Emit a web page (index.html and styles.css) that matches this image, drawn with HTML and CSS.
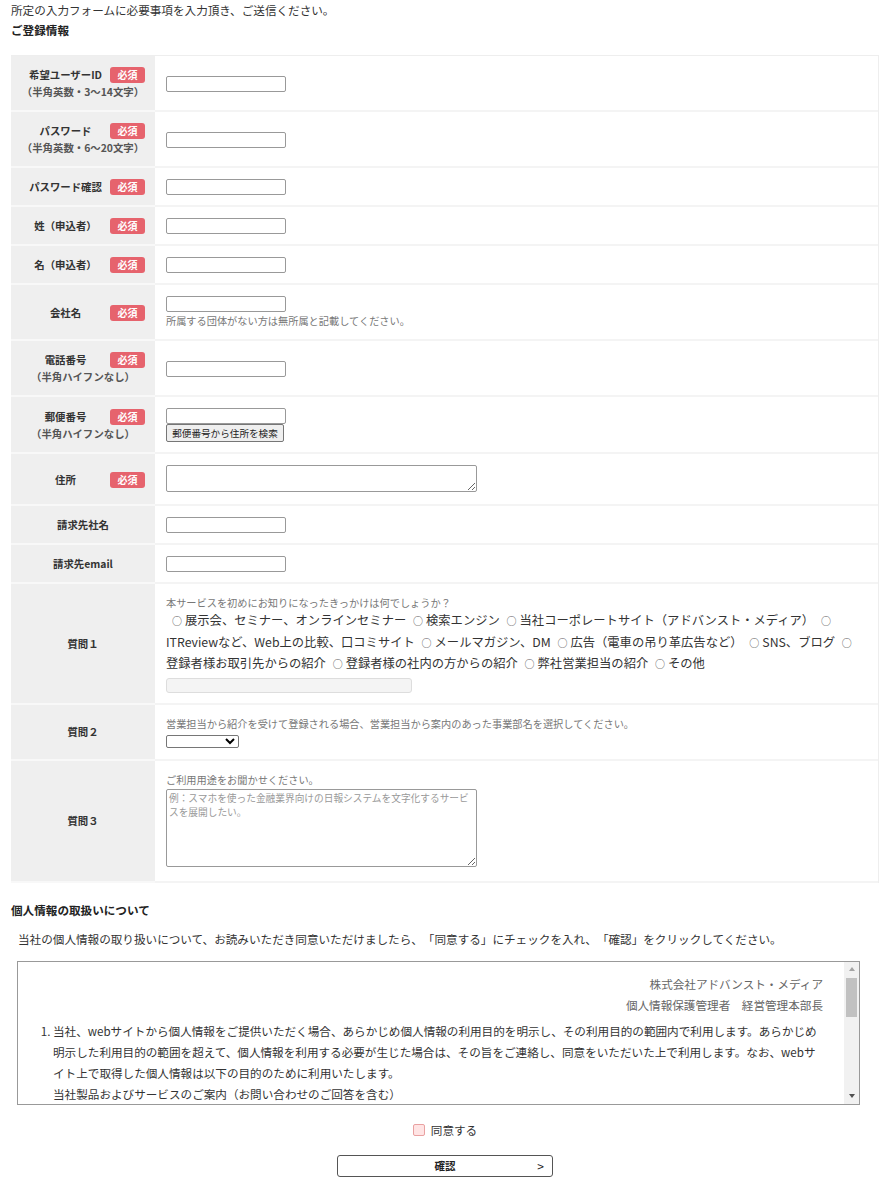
FILE: index.html
```html
<!DOCTYPE html>
<html lang="ja">
<head>
<meta charset="utf-8">
<title>ご登録情報</title>
<link rel="stylesheet" href="styles.css">
</head>
<body>
<div class="page">
  <p class="intro">所定の入力フォームに必要事項を入力頂き、ご送信ください。</p>
  <h2 class="sec-title">ご登録情報</h2>

  <table class="form-table">
    <tr>
      <th><div class="lab-line"><span class="lab">希望ユーザーID</span><span class="req">必須</span></div><div class="lab-sub">（半角英数・3〜14文字）</div></th>
      <td><input class="txt" type="text"></td>
    </tr>
    <tr>
      <th><div class="lab-line"><span class="lab">パスワード</span><span class="req">必須</span></div><div class="lab-sub">（半角英数・6〜20文字）</div></th>
      <td><input class="txt" type="password"></td>
    </tr>
    <tr>
      <th><div class="lab-line"><span class="lab">パスワード確認</span><span class="req">必須</span></div></th>
      <td><input class="txt" type="password"></td>
    </tr>
    <tr>
      <th><div class="lab-line"><span class="lab">姓（申込者）</span><span class="req">必須</span></div></th>
      <td><input class="txt" type="text"></td>
    </tr>
    <tr>
      <th><div class="lab-line"><span class="lab">名（申込者）</span><span class="req">必須</span></div></th>
      <td><input class="txt" type="text"></td>
    </tr>
    <tr>
      <th><div class="lab-line"><span class="lab">会社名</span><span class="req">必須</span></div></th>
      <td><input class="txt" type="text"><div class="note">所属する団体がない方は無所属と記載してください。</div></td>
    </tr>
    <tr>
      <th><div class="lab-line"><span class="lab">電話番号</span><span class="req">必須</span></div><div class="lab-sub">（半角ハイフンなし）</div></th>
      <td><input class="txt" type="text"></td>
    </tr>
    <tr>
      <th><div class="lab-line"><span class="lab">郵便番号</span><span class="req">必須</span></div><div class="lab-sub">（半角ハイフンなし）</div></th>
      <td><input class="txt" type="text"><button class="zip-btn" type="button">郵便番号から住所を検索</button></td>
    </tr>
    <tr>
      <th><div class="lab-line"><span class="lab">住所</span><span class="req">必須</span></div></th>
      <td><textarea class="ta-addr"></textarea></td>
    </tr>
    <tr>
      <th><div class="lab-line"><span class="lab">請求先社名</span></div></th>
      <td><input class="txt" type="text"></td>
    </tr>
    <tr>
      <th><div class="lab-line"><span class="lab">請求先email</span></div></th>
      <td><input class="txt" type="text"></td>
    </tr>
    <tr>
      <th><div class="lab-line"><span class="lab">質問１</span></div></th>
      <td>
        <div class="hint">本サービスを初めにお知りになったきっかけは何でしょうか？</div>
        <div class="opts"><span class="r first">○</span>展示会、セミナー、オンラインセミナー <span class="r">○</span>検索エンジン <span class="r">○</span>当社コーポレートサイト（アドバンスト・メディア） <span class="r">○</span><br>ITReviewなど、Web上の比較、口コミサイト <span class="r">○</span>メールマガジン、DM <span class="r">○</span>広告（電車の吊り革広告など） <span class="r">○</span>SNS、ブログ <span class="r">○</span><br>登録者様お取引先からの紹介 <span class="r">○</span>登録者様の社内の方からの紹介 <span class="r">○</span>弊社営業担当の紹介 <span class="r">○</span>その他</div>
        <input class="dis" type="text" disabled>
      </td>
    </tr>
    <tr>
      <th><div class="lab-line"><span class="lab">質問２</span></div></th>
      <td>
        <div class="hint">営業担当から紹介を受けて登録される場合、営業担当から案内のあった事業部名を選択してください。</div>
        <select class="sel"><option></option></select>
      </td>
    </tr>
    <tr>
      <th><div class="lab-line"><span class="lab">質問３</span></div></th>
      <td>
        <div class="hint">ご利用用途をお聞かせください。</div>
        <textarea class="ta-q3" placeholder="例：スマホを使った金融業界向けの日報システムを文字化するサービスを展開したい。"></textarea>
      </td>
    </tr>
  </table>

  <h2 class="sec-title sec-privacy">個人情報の取扱いについて</h2>
  <p class="lead">当社の個人情報の取り扱いについて、お読みいただき同意いただけましたら、「同意する」にチェックを入れ、「確認」をクリックしてください。</p>

  <div class="policy">
    <div class="policy-body">
      <p class="sign">株式会社アドバンスト・メディア</p>
      <p class="sign">個人情報保護管理者　経営管理本部長</p>
      <ol class="plist">
        <li>当社、webサイトから個人情報をご提供いただく場合、あらかじめ個人情報の利用目的を明示し、その利用目的の範囲内で利用します。あらかじめ明示した利用目的の範囲を超えて、個人情報を利用する必要が生じた場合は、その旨をご連絡し、同意をいただいた上で利用します。なお、webサイト上で取得した個人情報は以下の目的のために利用いたします。
          <ul class="sub">
            <li>当社製品およびサービスのご案内（お問い合わせのご回答を含む）</li>
            <li>当社製品およびサービスのご提供</li>
            <li>セミナー・イベント等のご案内</li>
          </ul>
        </li>
        <li>当社は、ご本人の同意がある場合または法令に基づく場合を除き、個人情報を第三者に提供いたしません。</li>
      </ol>
    </div>
    <div class="vscroll">
      <div class="arrow"><span class="tri-up"></span></div>
      <div class="track"><div class="thumb"></div></div>
      <div class="arrow"><span class="tri-down"></span></div>
    </div>
  </div>

  <div class="agree">
    <input class="chk" type="checkbox" id="agree">
    <label for="agree">同意する</label>
  </div>

  <button class="submit" type="button"><span></span><span class="submit-label">確認</span><span class="submit-arrow">&gt;</span></button>
</div>
</body>
</html>
```

FILE: styles.css
```css
html, body {
  margin: 0;
  padding: 0;
  background: #fff;
}

body {
  font-family: "Noto Sans CJK JP", "Noto Sans", sans-serif;
  font-size: 11.6px;
  line-height: 20px;
  color: #333;
  text-spacing-trim: space-all;
}

.page {
  padding: 0 14px 0 11px;
}

.intro {
  margin: 0;
  line-height: 20px;
}

.sec-title {
  margin: 0;
  font-size: 11.6px;
  font-weight: bold;
  line-height: 20px;
  color: #222;
}

.form-table {
  width: 100%;
  margin-top: 15px;
  border-collapse: separate;
  border-spacing: 0;
  border-top: 1px solid #eee;
  border-right: 1px solid #eee;
}

.form-table th {
  width: 144px;
  box-sizing: border-box;
  background: #efefef;
  padding: 11px 10px 10px;
  border-bottom: 2px solid #f8f8f8;
  vertical-align: middle;
  font-size: 10.4px;
  font-weight: bold;
  color: #333;
}

.form-table td {
  background: #fff;
  padding: 11px 11px 10px;
  border-bottom: 2px solid #f4f4f4;
  vertical-align: middle;
}

.lab-line {
  display: flex;
  align-items: center;
  height: 16px;
}

.lab {
  flex: 1;
  text-align: center;
  line-height: 16px;
  white-space: nowrap;
}

.req {
  width: 35px;
  height: 16px;
  line-height: 16px;
  background: #e6636d;
  color: #fff;
  border-radius: 3px;
  text-align: center;
  font-size: 10px;
}

.lab-sub {
  text-align: center;
  line-height: 17px;
  color: #555;
  white-space: nowrap;
}

.txt {
  display: block;
  width: 120px;
  height: 16px;
  box-sizing: border-box;
  margin: 0;
  padding: 0 2px;
  border: 1px solid #999;
  border-radius: 2px;
  font-size: 10px;
  background: #fff;
}

.note {
  font-size: 10.2px;
  line-height: 17px;
  color: #777;
}

.zip-btn {
  display: block;
  width: 118px;
  height: 18px;
  margin: 0;
  padding: 0;
  box-sizing: border-box;
  border: 1px solid #767676;
  border-radius: 2px;
  background: #efefef;
  font-family: inherit;
  font-size: 9.6px;
  line-height: 16px;
  color: #222;
}

.ta-addr {
  display: block;
  width: 311px;
  height: 27px;
  box-sizing: border-box;
  margin: 0 0 2px;
  border: 1px solid #999;
  border-radius: 2px;
  font-family: inherit;
}

.hint {
  font-size: 10.2px;
  line-height: 15px;
  color: #777;
  white-space: nowrap;
}

.opts {
  font-size: 12.3px;
  line-height: 21.5px;
  color: #333;
  white-space: nowrap;
}

.r {
  font-size: 10px;
  margin: 0 3px 0 4px;
  color: #555;
}

.r.first {
  margin-left: 6px;
}

.dis {
  display: block;
  width: 246px;
  height: 15px;
  box-sizing: border-box;
  margin: 3px 0 0;
  border: 1px solid #ddd;
  border-radius: 3px;
  background: #f4f4f4;
}

.sel {
  display: block;
  width: 73px;
  height: 13px;
  margin: 4px 0 1px;
  padding: 0;
  box-sizing: border-box;
  border: 1px solid #767676;
  border-radius: 2px;
  font-size: 8px;
  background: #fff;
}

.ta-q3 {
  display: block;
  width: 311px;
  height: 78px;
  box-sizing: border-box;
  margin: 2px 0 4px;
  padding: 1px 2px;
  border: 1px solid #999;
  border-radius: 2px;
  font-family: inherit;
  font-size: 9.7px;
  line-height: 14.5px;
}

.ta-q3::placeholder {
  color: #999;
}

.sec-privacy {
  margin-top: 17px;
}

.lead {
  margin: 9px 0 0;
  padding-left: 7px;
  line-height: 20px;
}

.policy {
  display: flex;
  width: 843px;
  height: 144px;
  box-sizing: border-box;
  margin: 12px 0 0 6px;
  border: 1px solid #999;
  overflow: hidden;
  line-height: 21px;
}

.policy-body {
  flex: 1;
  min-width: 0;
  padding: 12px 21px 0 20px;
  overflow: hidden;
}

.vscroll {
  width: 15px;
  flex: none;
  display: flex;
  flex-direction: column;
  background: #f1f1f1;
}

.arrow {
  height: 15px;
  display: flex;
  align-items: center;
  justify-content: center;
}

.tri-up {
  width: 0;
  height: 0;
  border-left: 3.5px solid transparent;
  border-right: 3.5px solid transparent;
  border-bottom: 4px solid #a3a3a3;
}

.tri-down {
  width: 0;
  height: 0;
  border-left: 3.5px solid transparent;
  border-right: 3.5px solid transparent;
  border-top: 4px solid #505050;
}

.track {
  flex: 1;
  padding: 1px 2px 0;
}

.thumb {
  height: 39px;
  background: #c1c1c1;
}

.sign {
  margin: 0;
  text-align: right;
  color: #666;
}

.plist {
  margin: 5px 0 0;
  padding-left: 15px;
}

.sub {
  list-style: none;
  margin: 0;
  padding: 0;
}

.agree {
  display: flex;
  justify-content: center;
  align-items: center;
  gap: 6px;
  margin-top: 15px;
  line-height: 20px;
}

.chk {
  appearance: none;
  -webkit-appearance: none;
  width: 12px;
  height: 12px;
  margin: 0;
  box-sizing: border-box;
  border: 1px solid #e9a1a1;
  border-radius: 2px;
  background: #ffe4e4;
}

.submit {
  display: grid;
  grid-template-columns: 1fr auto 1fr;
  align-items: center;
  width: 216px;
  height: 22px;
  margin: 15px auto 0;
  padding: 0;
  box-sizing: border-box;
  border: 1px solid #555;
  border-radius: 3px;
  background: #fff;
  font-family: inherit;
  color: #222;
}

.submit-label {
  font-size: 10.5px;
  font-weight: bold;
}

.submit-arrow {
  justify-self: end;
  padding-right: 8px;
  font-size: 12px;
}
```
